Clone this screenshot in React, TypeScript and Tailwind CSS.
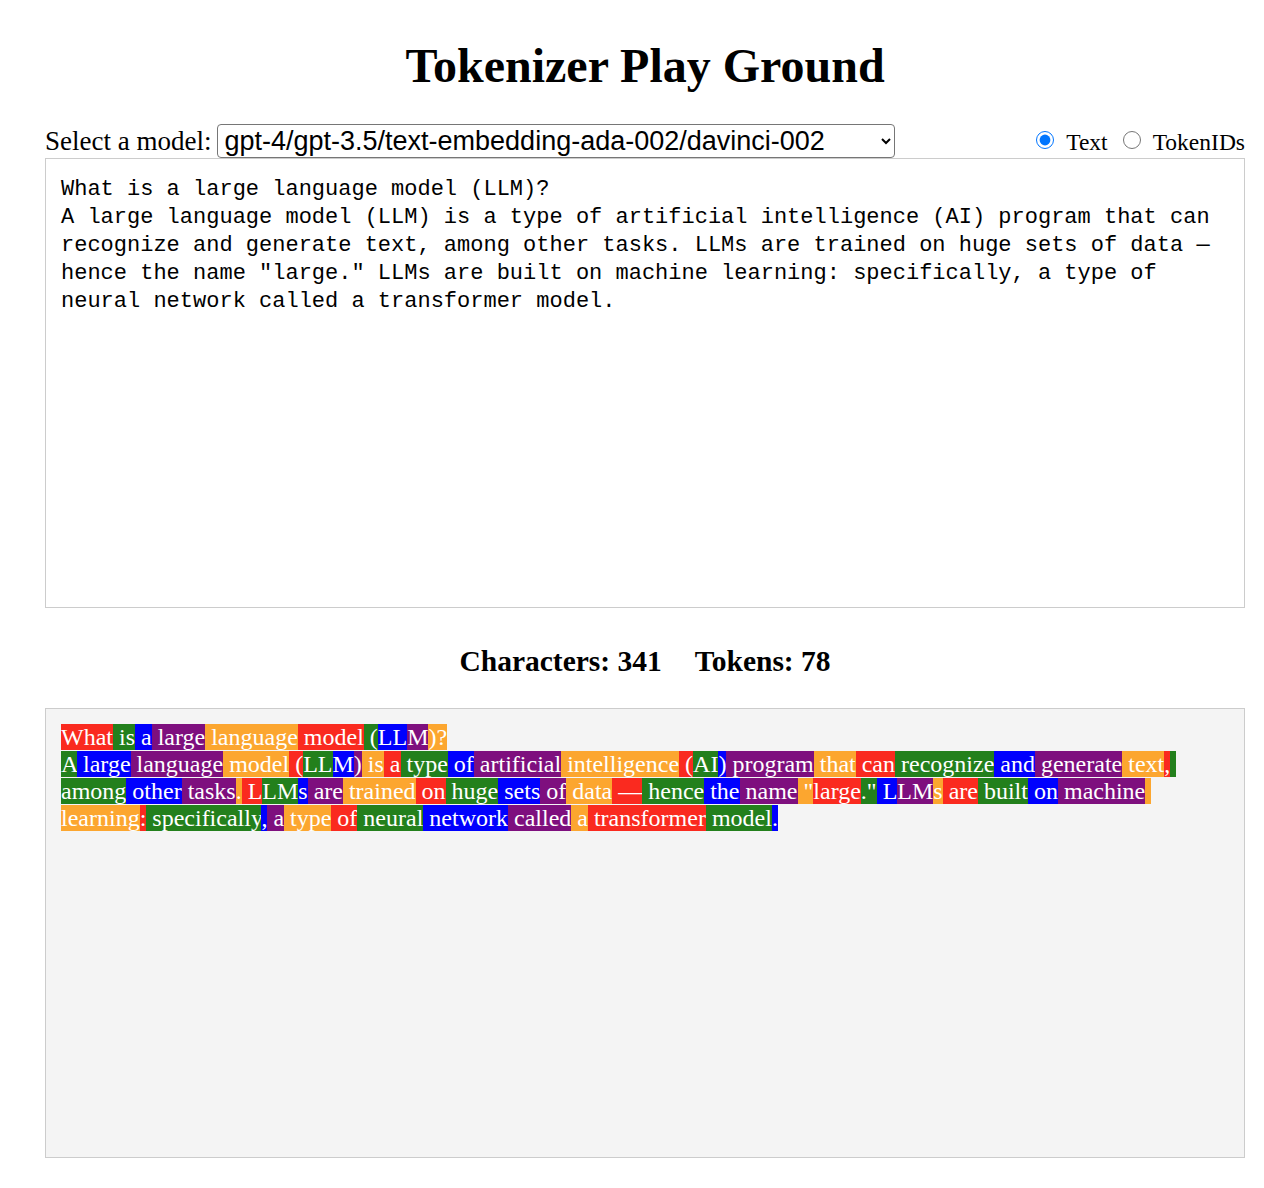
import React from "react";

const SAMPLE =
  'What is a large language model (LLM)?\nA large language model (LLM) is a type of artificial intelligence (AI) program that can recognize and generate text, among other tasks. LLMs are trained on huge sets of data — hence the name "large." LLMs are built on machine learning: specifically, a type of neural network called a transformer model.';

// token pieces as the tokenizer split them
const TOKENS = [
  "What", " is", " a", " large", " language", " model", " (", "LL", "M", ")?", "\n",
  "A", " large", " language", " model", " (", "LL", "M", ")", " is", " a", " type", " of",
  " artificial", " intelligence", " (", "AI", ")", " program", " that", " can", " recognize",
  " and", " generate", " text", ",", " among", " other", " tasks", ".", " L", "LM", "s",
  " are", " trained", " on", " huge", " sets", " of", " data", " —", " hence", " the",
  " name", ' "', "large", '."', " L", "LM", "s", " are", " built", " on", " machine",
  " learning", ":", " specifically", ",", " a", " type", " of", " neural", " network",
  " called", " a", " transformer", " model", ".",
];

const COLORS = ["bg-[#fa2a1f]", "bg-[#23801c]", "bg-[#0000fe]", "bg-[#7e0f7e]", "bg-[#fca62f]"];

const serif = "font-['Liberation_Serif','Times_New_Roman',serif]";

export default function App() {
  return (
    <div className={`bg-white min-h-[1188px] text-black ${serif}`}>
      <div className="w-[1200px] ml-[45px] pt-[39px] pb-[30px]">
        {/* Header */}
        <h1 className="text-center font-bold text-[48px] leading-[54px]">Tokenizer Play Ground</h1>

        {/* Model picker + mode */}
        <div className="mt-[31px] h-[34px] flex items-center justify-between">
          <div className="flex items-center gap-[6px]">
            <label className="text-[27px] leading-[34px]">Select a model:</label>
            <select
              defaultValue="cl100k"
              className="h-[34px] w-[678px] border border-[#767676] rounded-[4px] px-[2px] text-[27px] bg-white font-['Liberation_Sans',Arial,sans-serif]"
            >
              <option value="cl100k">gpt-4/gpt-3.5/text-embedding-ada-002/davinci-002</option>
              <option value="p50k">text-davinci-003/code-davinci-002</option>
              <option value="r50k">gpt-3/davinci</option>
            </select>
          </div>
          <div className="flex items-center text-[23.5px] leading-[34px] pt-[2px]">
            <input type="radio" name="mode" defaultChecked className="w-[18px] h-[18px] mr-[12px] mb-[4px]" />
            <span className="mr-[15px]">Text</span>
            <input type="radio" name="mode" className="w-[18px] h-[18px] mr-[12px] mb-[4px]" />
            <span>TokenIDs</span>
          </div>
        </div>

        <textarea
          defaultValue={SAMPLE}
          className="block w-[1200px] h-[450px] border border-[#cccccc] px-[15px] pt-[17px] pb-[13px] resize-none text-[22px] leading-[28px] font-['Liberation_Mono','Courier_New',monospace] outline-none"
        />

        {/* Stats */}
        <h2 className="mt-[36px] flex justify-center gap-[33px] font-bold text-[29.5px] leading-[35px]">
          <span>Characters: 341</span>
          <span>Tokens: 78</span>
        </h2>

        {/* Token view */}
        <div className="mt-[29px] h-[450px] border border-[#cccccc] bg-[#f4f4f4] p-[15px] text-[24px] leading-[27px] text-white whitespace-pre-wrap">
          {TOKENS.map((t, i) =>
            t === "\n" ? (
              <br key={i} />
            ) : (
              <span key={i} className={COLORS[i % 5]}>
                {t}
              </span>
            )
          )}
        </div>
      </div>
    </div>
  );
}
